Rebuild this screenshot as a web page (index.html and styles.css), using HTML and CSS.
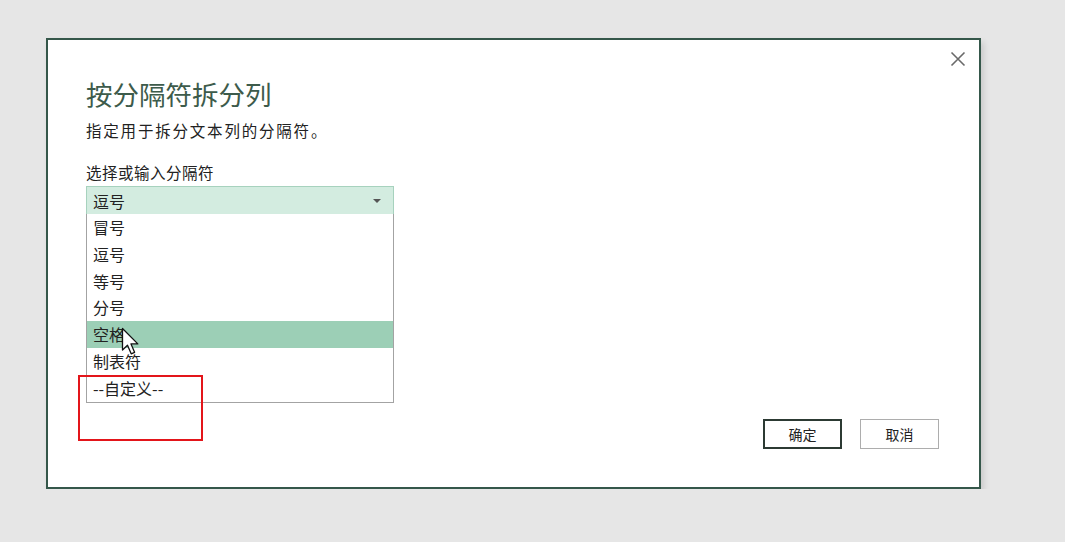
FILE: index.html
```html
<!DOCTYPE html>
<html lang="zh">
<head>
<meta charset="utf-8">
<link rel="stylesheet" href="styles.css">
</head>
<body>
<div class="dialog">
  <button class="close" aria-label="关闭">
    <svg width="16" height="16" viewBox="0 0 16 16"><path d="M1.5 1.5L14.5 14.5M14.5 1.5L1.5 14.5" stroke="#6a6a6a" stroke-width="1.6" fill="none"/></svg>
  </button>
  <h1 class="title">按分隔符拆分列</h1>
  <p class="desc">指定用于拆分文本列的分隔符。</p>
  <div class="label">选择或输入分隔符</div>
  <div class="combo">
    <div class="select">
      <span>逗号</span>
      <svg class="arrow" width="8" height="4" viewBox="0 0 8 4"><path d="M0 0H8L4 4Z" fill="#555"/></svg>
    </div>
    <ul class="list">
      <li>冒号</li>
      <li>逗号</li>
      <li>等号</li>
      <li>分号</li>
      <li class="hl">空格</li>
      <li>制表符</li>
      <li>--自定义--</li>
    </ul>
    <svg class="cursor" width="20" height="30" viewBox="0 0 20 30"><path d="M1.5 1.5V23L6.5 18.2L10.2 26.8L13.6 25.3L10 16.9H16.8Z" fill="#fff" stroke="#111" stroke-width="1.3" stroke-linejoin="round"/></svg>
  </div>
  <div class="mark"></div>
  <div class="actions">
    <button class="btn primary">确定</button>
    <button class="btn">取消</button>
  </div>
</div>
</body>
</html>
```
FILE: styles.css
```css
html, body {
  margin: 0;
  padding: 0;
  background: #e6e6e6;
  font-family: "Noto Sans CJK SC", "Noto Sans", sans-serif;
  color: #222;
}
.dialog {
  position: relative;
  box-sizing: border-box;
  margin: 38px 0 0 46px;
  width: 935px;
  height: 451px;
  background: #fff;
  border: 2px solid #35574a;
  box-shadow: 3px 4px 6px rgba(0,0,0,0.12);
  padding: 0 40px 38px 38px;
  display: flex;
  flex-direction: column;
}
.close {
  position: absolute;
  top: 10px;
  right: 12px;
  width: 18px;
  height: 18px;
  padding: 0;
  border: 0;
  background: none;
  display: flex;
  align-items: center;
  justify-content: center;
}
.title {
  margin: 37px 0 0;
  font-size: 26.5px;
  font-weight: 400;
  line-height: 34px;
  color: #3d5b4b;
}
.desc {
  margin: 9px 0 0;
  font-size: 15.5px;
  line-height: 20px;
  letter-spacing: 1.8px;
}
.label {
  margin-top: 22px;
  font-size: 15.5px;
  line-height: 20px;
  letter-spacing: 0.5px;
}
.combo {
  position: relative;
  margin-top: 4px;
  width: 308px;
}
.select {
  box-sizing: border-box;
  height: 29px;
  background: #d3ece0;
  border: 1px solid #a7d2be;
  padding: 0 12px 0 6px;
  display: flex;
  align-items: center;
  justify-content: space-between;
  font-size: 16px;
}
.list {
  position: absolute;
  top: 28px;
  left: 0;
  right: 0;
  margin: 0;
  padding: 0;
  list-style: none;
  background: #fff;
  border: 1px solid #a3a3a3;
  border-top: 0;
}
.list li {
  height: 26.8px;
  line-height: 26.8px;
  padding-left: 6px;
  font-size: 16px;
}
.list li.hl {
  background: #9ccfb6;
}
.cursor {
  position: absolute;
  left: 35px;
  top: 141px;
}
.mark {
  position: absolute;
  left: 30px;
  top: 335px;
  width: 121px;
  height: 62px;
  border: 2px solid #e3151a;
}
.actions {
  margin-top: auto;
  display: flex;
  justify-content: flex-end;
  gap: 18px;
}
.btn {
  box-sizing: border-box;
  width: 79px;
  height: 30px;
  background: #fff;
  border: 1px solid #adadad;
  font-family: inherit;
  font-size: 14px;
  color: #222;
  padding: 0;
}
.btn.primary {
  border: 2px solid #2c3a33;
}
```
